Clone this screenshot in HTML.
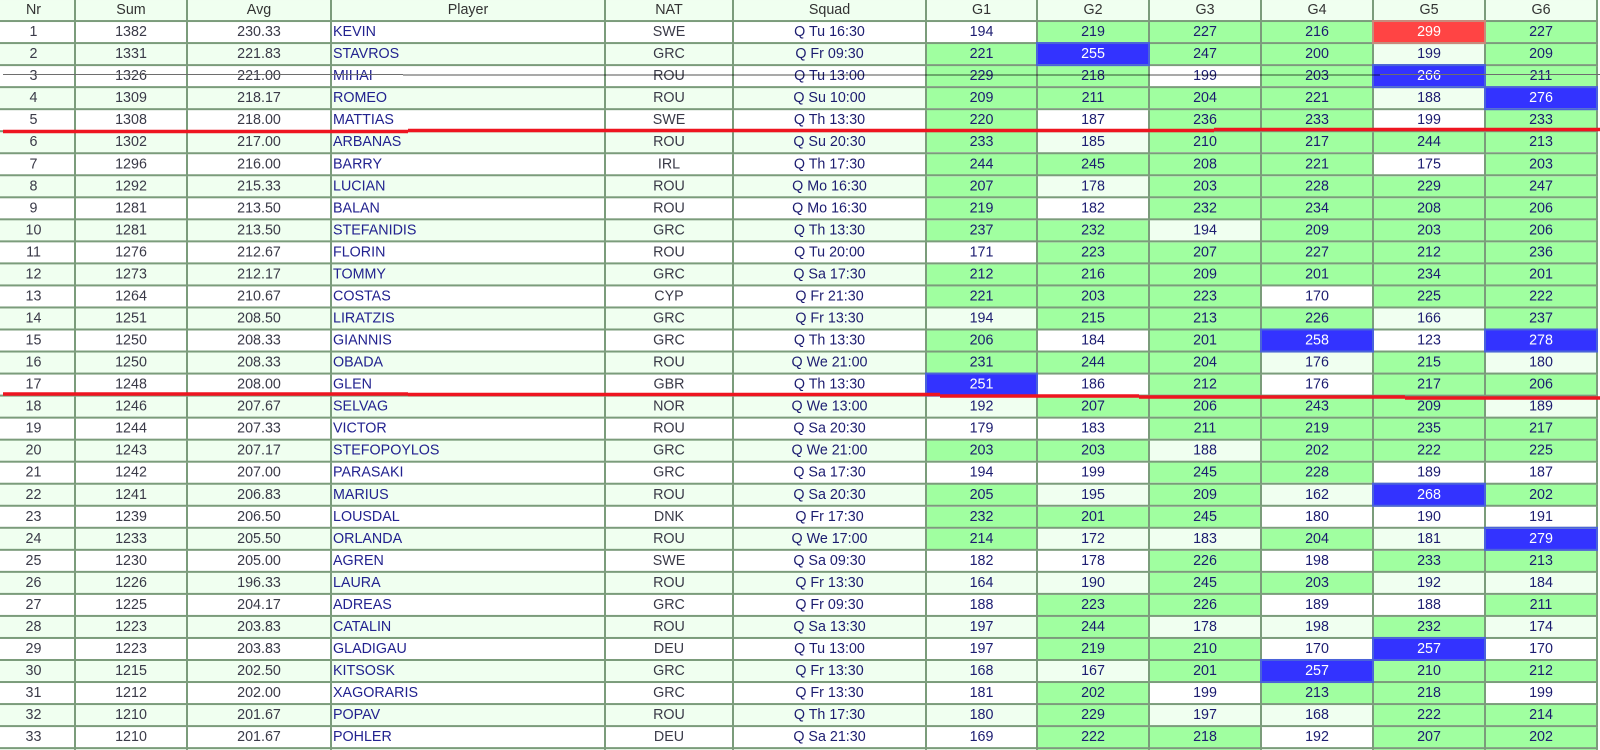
<!DOCTYPE html>
<html><head><meta charset="utf-8"><title>Standings</title>
<style>
html,body{margin:0;padding:0;width:1600px;height:750px;overflow:hidden;background:#fff}
body{position:relative}
table{position:absolute;left:-2px;top:-2px;width:1598px;table-layout:fixed;border-collapse:collapse;font:14.3px "Liberation Sans",sans-serif;color:#1c1c70;transform-origin:0 0;transform:scaleY(1.0015);filter:blur(.3px)}
td,th{border:2px solid #7b9c7b;height:20px;padding:0 1px;text-align:center;font-weight:400;white-space:nowrap;overflow:hidden;line-height:20px;background-clip:padding-box}
th{background:#f0fff0;color:#333}
td:first-child,th:first-child{padding-right:8px}
tr:nth-child(even) td{background:#f0fff0}
tr:nth-child(odd) td{background:#fff}
td:nth-child(-n+3),td:nth-child(5){color:#3a3a48}
td:nth-child(4){text-align:left;color:#22228f}
tr td.g{background:#a0ffa0}
tr td.b{background:#3333ff;color:#fff;outline:2px solid #4a63da;outline-offset:-1px;position:relative;box-shadow:0 0 2px #6f86f0}
tr td.r{background:#ff4444;color:#fff;outline:2px solid #c98a7c;outline-offset:-1px;position:relative}
svg{position:absolute;left:0;top:0}
</style></head><body>
<table>
<colgroup><col style="width:76px"><col style="width:112px"><col style="width:144px"><col style="width:274px"><col style="width:128px"><col style="width:193px"><col style="width:111px"><col style="width:112px"><col style="width:112px"><col style="width:112px"><col style="width:112px"><col style="width:112px"></colgroup>
<thead><tr><th>Nr</th><th>Sum</th><th>Avg</th><th>Player</th><th>NAT</th><th>Squad</th><th>G1</th><th>G2</th><th>G3</th><th>G4</th><th>G5</th><th>G6</th></tr></thead>
<tbody>
<tr><td>1</td><td>1382</td><td>230.33</td><td>KEVIN</td><td>SWE</td><td>Q Tu 16:30</td><td>194</td><td class="g">219</td><td class="g">227</td><td class="g">216</td><td class="r">299</td><td class="g">227</td></tr>
<tr><td>2</td><td>1331</td><td>221.83</td><td>STAVROS</td><td>GRC</td><td>Q Fr 09:30</td><td class="g">221</td><td class="b">255</td><td class="g">247</td><td class="g">200</td><td>199</td><td class="g">209</td></tr>
<tr><td>3</td><td>1326</td><td>221.00</td><td>MIHAI</td><td>ROU</td><td>Q Tu 13:00</td><td class="g">229</td><td class="g">218</td><td>199</td><td class="g">203</td><td class="b">266</td><td class="g">211</td></tr>
<tr><td>4</td><td>1309</td><td>218.17</td><td>ROMEO</td><td>ROU</td><td>Q Su 10:00</td><td class="g">209</td><td class="g">211</td><td class="g">204</td><td class="g">221</td><td>188</td><td class="b">276</td></tr>
<tr><td>5</td><td>1308</td><td>218.00</td><td>MATTIAS</td><td>SWE</td><td>Q Th 13:30</td><td class="g">220</td><td>187</td><td class="g">236</td><td class="g">233</td><td>199</td><td class="g">233</td></tr>
<tr><td>6</td><td>1302</td><td>217.00</td><td>ARBANAS</td><td>ROU</td><td>Q Su 20:30</td><td class="g">233</td><td>185</td><td class="g">210</td><td class="g">217</td><td class="g">244</td><td class="g">213</td></tr>
<tr><td>7</td><td>1296</td><td>216.00</td><td>BARRY</td><td>IRL</td><td>Q Th 17:30</td><td class="g">244</td><td class="g">245</td><td class="g">208</td><td class="g">221</td><td>175</td><td class="g">203</td></tr>
<tr><td>8</td><td>1292</td><td>215.33</td><td>LUCIAN</td><td>ROU</td><td>Q Mo 16:30</td><td class="g">207</td><td>178</td><td class="g">203</td><td class="g">228</td><td class="g">229</td><td class="g">247</td></tr>
<tr><td>9</td><td>1281</td><td>213.50</td><td>BALAN</td><td>ROU</td><td>Q Mo 16:30</td><td class="g">219</td><td>182</td><td class="g">232</td><td class="g">234</td><td class="g">208</td><td class="g">206</td></tr>
<tr><td>10</td><td>1281</td><td>213.50</td><td>STEFANIDIS</td><td>GRC</td><td>Q Th 13:30</td><td class="g">237</td><td class="g">232</td><td>194</td><td class="g">209</td><td class="g">203</td><td class="g">206</td></tr>
<tr><td>11</td><td>1276</td><td>212.67</td><td>FLORIN</td><td>ROU</td><td>Q Tu 20:00</td><td>171</td><td class="g">223</td><td class="g">207</td><td class="g">227</td><td class="g">212</td><td class="g">236</td></tr>
<tr><td>12</td><td>1273</td><td>212.17</td><td>TOMMY</td><td>GRC</td><td>Q Sa 17:30</td><td class="g">212</td><td class="g">216</td><td class="g">209</td><td class="g">201</td><td class="g">234</td><td class="g">201</td></tr>
<tr><td>13</td><td>1264</td><td>210.67</td><td>COSTAS</td><td>CYP</td><td>Q Fr 21:30</td><td class="g">221</td><td class="g">203</td><td class="g">223</td><td>170</td><td class="g">225</td><td class="g">222</td></tr>
<tr><td>14</td><td>1251</td><td>208.50</td><td>LIRATZIS</td><td>GRC</td><td>Q Fr 13:30</td><td>194</td><td class="g">215</td><td class="g">213</td><td class="g">226</td><td>166</td><td class="g">237</td></tr>
<tr><td>15</td><td>1250</td><td>208.33</td><td>GIANNIS</td><td>GRC</td><td>Q Th 13:30</td><td class="g">206</td><td>184</td><td class="g">201</td><td class="b">258</td><td>123</td><td class="b">278</td></tr>
<tr><td>16</td><td>1250</td><td>208.33</td><td>OBADA</td><td>ROU</td><td>Q We 21:00</td><td class="g">231</td><td class="g">244</td><td class="g">204</td><td>176</td><td class="g">215</td><td>180</td></tr>
<tr><td>17</td><td>1248</td><td>208.00</td><td>GLEN</td><td>GBR</td><td>Q Th 13:30</td><td class="b">251</td><td>186</td><td class="g">212</td><td>176</td><td class="g">217</td><td class="g">206</td></tr>
<tr><td>18</td><td>1246</td><td>207.67</td><td>SELVAG</td><td>NOR</td><td>Q We 13:00</td><td>192</td><td class="g">207</td><td class="g">206</td><td class="g">243</td><td class="g">209</td><td>189</td></tr>
<tr><td>19</td><td>1244</td><td>207.33</td><td>VICTOR</td><td>ROU</td><td>Q Sa 20:30</td><td>179</td><td>183</td><td class="g">211</td><td class="g">219</td><td class="g">235</td><td class="g">217</td></tr>
<tr><td>20</td><td>1243</td><td>207.17</td><td>STEFOPOYLOS</td><td>GRC</td><td>Q We 21:00</td><td class="g">203</td><td class="g">203</td><td>188</td><td class="g">202</td><td class="g">222</td><td class="g">225</td></tr>
<tr><td>21</td><td>1242</td><td>207.00</td><td>PARASAKI</td><td>GRC</td><td>Q Sa 17:30</td><td>194</td><td>199</td><td class="g">245</td><td class="g">228</td><td>189</td><td>187</td></tr>
<tr><td>22</td><td>1241</td><td>206.83</td><td>MARIUS</td><td>ROU</td><td>Q Sa 20:30</td><td class="g">205</td><td>195</td><td class="g">209</td><td>162</td><td class="b">268</td><td class="g">202</td></tr>
<tr><td>23</td><td>1239</td><td>206.50</td><td>LOUSDAL</td><td>DNK</td><td>Q Fr 17:30</td><td class="g">232</td><td class="g">201</td><td class="g">245</td><td>180</td><td>190</td><td>191</td></tr>
<tr><td>24</td><td>1233</td><td>205.50</td><td>ORLANDA</td><td>ROU</td><td>Q We 17:00</td><td class="g">214</td><td>172</td><td>183</td><td class="g">204</td><td>181</td><td class="b">279</td></tr>
<tr><td>25</td><td>1230</td><td>205.00</td><td>AGREN</td><td>SWE</td><td>Q Sa 09:30</td><td>182</td><td>178</td><td class="g">226</td><td>198</td><td class="g">233</td><td class="g">213</td></tr>
<tr><td>26</td><td>1226</td><td>196.33</td><td>LAURA</td><td>ROU</td><td>Q Fr 13:30</td><td>164</td><td>190</td><td class="g">245</td><td class="g">203</td><td>192</td><td>184</td></tr>
<tr><td>27</td><td>1225</td><td>204.17</td><td>ADREAS</td><td>GRC</td><td>Q Fr 09:30</td><td>188</td><td class="g">223</td><td class="g">226</td><td>189</td><td>188</td><td class="g">211</td></tr>
<tr><td>28</td><td>1223</td><td>203.83</td><td>CATALIN</td><td>ROU</td><td>Q Sa 13:30</td><td>197</td><td class="g">244</td><td>178</td><td>198</td><td class="g">232</td><td>174</td></tr>
<tr><td>29</td><td>1223</td><td>203.83</td><td>GLADIGAU</td><td>DEU</td><td>Q Tu 13:00</td><td>197</td><td class="g">219</td><td class="g">210</td><td>170</td><td class="b">257</td><td>170</td></tr>
<tr><td>30</td><td>1215</td><td>202.50</td><td>KITSOSK</td><td>GRC</td><td>Q Fr 13:30</td><td>168</td><td>167</td><td class="g">201</td><td class="b">257</td><td class="g">210</td><td class="g">212</td></tr>
<tr><td>31</td><td>1212</td><td>202.00</td><td>XAGORARIS</td><td>GRC</td><td>Q Fr 13:30</td><td>181</td><td class="g">202</td><td>199</td><td class="g">213</td><td class="g">218</td><td>199</td></tr>
<tr><td>32</td><td>1210</td><td>201.67</td><td>POPAV</td><td>ROU</td><td>Q Th 17:30</td><td>180</td><td class="g">229</td><td>197</td><td>168</td><td class="g">222</td><td class="g">214</td></tr>
<tr><td>33</td><td>1210</td><td>201.67</td><td>POHLER</td><td>DEU</td><td>Q Sa 21:30</td><td>169</td><td class="g">222</td><td class="g">218</td><td>192</td><td class="g">207</td><td class="g">202</td></tr>
<tr><td></td><td></td><td></td><td></td><td></td><td></td><td></td><td class="g"></td><td class="g"></td><td></td><td class="g"></td><td class="g"></td></tr>
</tbody></table>
<svg width="1600" height="750" viewBox="0 0 1600 750" fill="none">
<g stroke="#6e6e6e" stroke-width="1"><path d="M3 74.5H403"/><path d="M1380 74.5H1600"/></g>
<path d="M403 75H1380" stroke="#8c8c8c" stroke-width="2" style="mix-blend-mode:multiply" opacity=".75"/>
<g stroke="#ee1520" stroke-width="3.5">
<path d="M3 131.5H408"/><path d="M408 130.5H1214"/><path d="M1214 129.5H1600"/>
<path d="M3 394H408"/><path d="M408 394.5H940"/><path d="M940 396H1139"/><path d="M1139 397H1405"/><path d="M1405 398H1600"/>
</g>
</svg>
</body></html>
